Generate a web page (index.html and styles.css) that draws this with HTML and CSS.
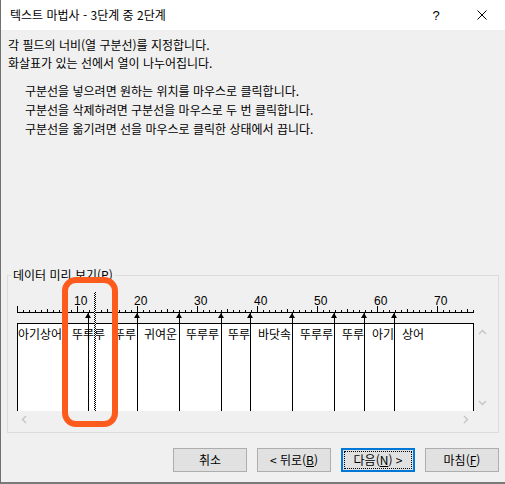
FILE: index.html
```html
<!DOCTYPE html>
<html lang="ko">
<head>
<meta charset="utf-8">
<title>텍스트 마법사</title>
<link rel="stylesheet" href="styles.css">
</head>
<body>
<div class="window">
  <div class="titlebar">
    <span class="title">텍스트 마법사 - 3단계 중 2단계</span>
    <span class="caption-btn">?</span>
    <span class="caption-btn"><svg width="10" height="10" viewBox="0 0 10 10"><path d="M0.5 0.5 L9.5 9.5 M9.5 0.5 L0.5 9.5" stroke="#000" stroke-width="1" fill="none"/></svg></span>
  </div>

  <p class="intro">각 필드의 너비(열 구분선)를 지정합니다.<br>화살표가 있는 선에서 열이 나누어집니다.</p>
  <p class="hints">구분선을 넣으려면 원하는 위치를 마우스로 클릭합니다.<br>구분선을 삭제하려면 구분선을 마우스로 두 번 클릭합니다.<br>구분선을 옮기려면 선을 마우스로 클릭한 상태에서 끕니다.</p>

  <fieldset class="group">
    <legend>데이터 미리 보기(<u>P</u>)</legend>
    <div class="preview">
      <div class="ruler">
        <div class="ruler-nums"><span>10</span><span>20</span><span>30</span><span>40</span><span>50</span><span>60</span><span>70</span></div>
        <div class="ruler-scale"></div>
      </div>
      <div class="viewport">
        <div class="box">
          <div class="cells">
            <span style="grid-column:1 / span 8">아기상어</span>
            <span style="grid-column:10 / span 6">뚜루루</span>
            <span style="grid-column:17 / span 4">뚜루</span>
            <span style="grid-column:22 / span 6">귀여운</span>
            <span style="grid-column:29 / span 6">뚜루루</span>
            <span style="grid-column:36 / span 4">뚜루</span>
            <span style="grid-column:41 / span 6">바닷속</span>
            <span style="grid-column:48 / span 6">뚜루루</span>
            <span style="grid-column:55 / span 4">뚜루</span>
            <span style="grid-column:60 / span 4">아기</span>
            <span style="grid-column:65 / span 4">상어</span>
          </div>
        </div>
        <div class="vscroll">
          <svg width="9" height="6" viewBox="0 0 9 6"><polyline points="1,5 4.5,1.5 8,5" fill="none" stroke="#c4c4c4" stroke-width="1.4"/></svg>
          <svg width="9" height="6" viewBox="0 0 9 6"><polyline points="1,1 4.5,4.5 8,1" fill="none" stroke="#c4c4c4" stroke-width="1.4"/></svg>
        </div>
      </div>
      <div class="hscroll">
        <svg width="6" height="9" viewBox="0 0 6 9"><polyline points="5,1 1.5,4.5 5,8" fill="none" stroke="#c4c4c4" stroke-width="1.4"/></svg>
        <svg width="6" height="9" viewBox="0 0 6 9"><polyline points="1,1 4.5,4.5 1,8" fill="none" stroke="#c4c4c4" stroke-width="1.4"/></svg>
      </div>
      <span class="sep" style="left:48px"></span>
      <span class="sep" style="left:71px"></span>
      <span class="sep" style="left:120px"></span>
      <span class="sep" style="left:162px"></span>
      <span class="sep" style="left:204px"></span>
      <span class="sep" style="left:233px"></span>
      <span class="sep" style="left:275px"></span>
      <span class="sep" style="left:317px"></span>
      <span class="sep" style="left:347px"></span>
      <span class="sep" style="left:377px"></span>
      <span class="drag"></span>
    </div>
  </fieldset>

  <div class="buttons">
    <button class="btn">취소</button>
    <button class="btn">&lt; 뒤로(<u>B</u>)</button>
    <button class="btn default">다음(<u>N</u>) &gt;</button>
    <button class="btn">마침(<u>F</u>)</button>
  </div>

  <div class="highlight"></div>
</div>
</body>
</html>
```

FILE: styles.css
```css
body {
  margin: 0;
  font-family: "Noto Sans CJK KR", "Noto Sans", sans-serif;
  font-size: 12px;
  color: #000;
}

.window {
  position: relative;
  width: 505px;
  height: 484px;
  box-sizing: border-box;
  border-left: 1px solid #707070;
  border-bottom: 2px solid #7a7a7a;
  background: #f0f0f0;
  overflow: hidden;
}

.titlebar {
  display: flex;
  align-items: center;
  height: 30px;
  background: #fff;
  padding-left: 9px;
}

.title {
  flex: 1;
  line-height: 16px;
}

.caption-btn {
  width: 46px;
  height: 30px;
  display: flex;
  align-items: center;
  justify-content: center;
  font-family: "Liberation Sans", sans-serif;
  font-size: 13px;
}

.intro {
  margin: 6px 0 0 7px;
  line-height: 18px;
}

.hints {
  margin: 9px 0 0 24px;
  line-height: 19px;
}

.group {
  margin: 129px 6px 0 6px;
  padding: 7px 0 5px 9px;
  border: 1px solid #dcdcdc;
  min-width: 0;
}

.group legend {
  padding: 0 2px;
  margin-left: -6px;
  line-height: 16px;
  font-size: 12px;
}

.preview {
  position: relative;
  width: 474px;
}

.ruler {
  width: 457px;
  height: 33px;
  padding-top: 5px;
  box-sizing: border-box;
}

.ruler-nums {
  display: flex;
  padding-left: 57px;
  height: 11px;
  line-height: 12px;
  font-family: "Liberation Sans", sans-serif;
  font-size: 12px;
}

.ruler-nums span {
  flex: 0 0 60px;
}

.ruler-scale {
  height: 7px;
  background:
    linear-gradient(#000, #000) left bottom / 100% 1px no-repeat,
    repeating-linear-gradient(to right, #000 0 1px, transparent 1px 60px) left bottom / 100% 7px no-repeat,
    repeating-linear-gradient(to right, #000 0 1px, transparent 1px 30px) left bottom / 100% 4px no-repeat,
    repeating-linear-gradient(to right, #000 0 1px, transparent 1px 6px) left bottom / 100% 3px no-repeat;
}

.viewport {
  display: flex;
}

.box {
  width: 457px;
  height: 88px;
  box-sizing: border-box;
  border: 1px solid #000;
  border-bottom: none;
  background: #fff;
  overflow: hidden;
}

.cells {
  display: grid;
  grid-template-columns: repeat(76, 6px);
  margin-top: 2px;
  line-height: 16px;
  white-space: nowrap;
}

.vscroll {
  width: 17px;
  height: 88px;
  box-sizing: border-box;
  padding: 6px 0 5px;
  display: flex;
  flex-direction: column;
  justify-content: space-between;
  align-items: center;
}

.hscroll {
  width: 457px;
  height: 16px;
  box-sizing: border-box;
  padding: 0 5px 0 4px;
  display: flex;
  justify-content: space-between;
  align-items: center;
}

.sep {
  position: absolute;
  top: 23px;
  width: 1px;
  height: 98px;
  background: #000;
}

.sep::before {
  content: "";
  position: absolute;
  top: 0;
  left: -3px;
  border-left: 3.5px solid transparent;
  border-right: 3.5px solid transparent;
  border-bottom: 5px solid #000;
}

.drag {
  position: absolute;
  left: 77px;
  top: 2px;
  width: 2px;
  height: 119px;
  background: repeating-conic-gradient(#000 0 25%, #fff 0 50%) 0 0 / 2px 2px;
}

.buttons {
  display: flex;
  justify-content: flex-end;
  gap: 10px;
  margin-top: 15px;
  padding-right: 6px;
}

.btn {
  width: 74px;
  height: 24px;
  box-sizing: border-box;
  border: 1px solid #adadad;
  background: #e1e1e1;
  font-family: "Noto Sans CJK KR", "Noto Sans", sans-serif;
  font-size: 12px;
  color: #000;
  padding: 0;
  display: flex;
  align-items: center;
  justify-content: center;
  line-height: 16px;
}

.btn.default {
  border: 2px solid #0078d7;
  outline: 1px dotted #000;
  outline-offset: -4px;
}

.highlight {
  position: absolute;
  left: 61px;
  top: 277px;
  width: 56px;
  height: 150px;
  box-sizing: border-box;
  border: 6px solid #fd5a1e;
  border-radius: 14px;
}
```
